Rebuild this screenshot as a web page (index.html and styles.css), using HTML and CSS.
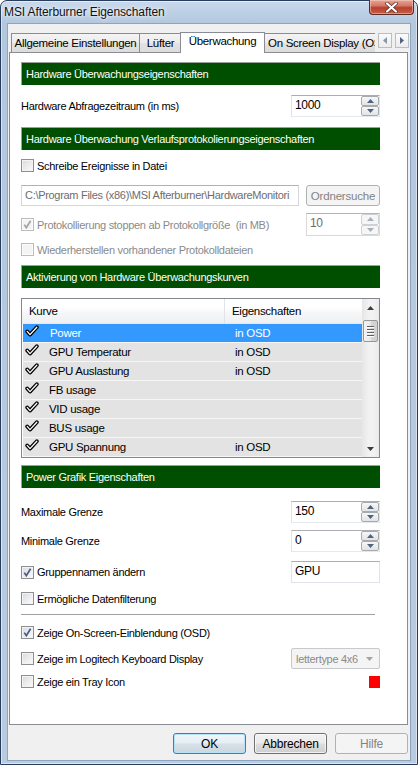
FILE: index.html
```html
<!DOCTYPE html>
<html>
<head>
<meta charset="utf-8">
<title>MSI Afterburner Eigenschaften</title>
<link rel="stylesheet" href="styles.css">
</head>
<body>
<div class="window">
  <div class="titlebar">
    <span class="title">MSI Afterburner Eigenschaften</span>
    <div class="close">
      <svg width="13" height="11" viewBox="0 0 13 11"><path d="M2 1.5 L11 9.5 M11 1.5 L2 9.5" stroke="#5a2a20" stroke-width="3.6" stroke-linecap="round"/><path d="M2 1.5 L11 9.5 M11 1.5 L2 9.5" stroke="#fff" stroke-width="2.2" stroke-linecap="round"/></svg>
    </div>
  </div>
  <div class="client">
    <div class="tabs">
      <div class="tablist">
        <div class="tab t1">Allgemeine Einstellungen</div>
        <div class="tab t2">Lüfter</div>
        <div class="tab active">Überwachung</div>
        <div class="tab t4">On Screen Display (OSD)</div>
      </div>
      <div class="tabarrow"><svg width="4" height="7" viewBox="0 0 4 7"><path d="M4 0 L0 3.5 L4 7Z" fill="#8a96a8"/></svg></div>
      <div class="tabarrow"><svg width="4" height="7" viewBox="0 0 4 7"><path d="M0 0 L4 3.5 L0 7Z" fill="#4e6483"/></svg></div>
    </div>
    <div class="panel">
      <div class="hdr h1">Hardware Überwachungseigenschaften</div>
      <div class="row r-poll">
        <span>Hardware Abfragezeitraum (in ms)</span>
        <div class="spin"><span class="val">1000</span><div class="sbtns"><span class="sb"><svg width="7" height="4" viewBox="0 0 7 4"><path d="M0 4 L3.5 0 L7 4Z" fill="#4e6483"/></svg></span><span class="sb"><svg width="7" height="4" viewBox="0 0 7 4"><path d="M0 0 L3.5 4 L7 0Z" fill="#4e6483"/></svg></span></div></div>
      </div>
      <div class="hdr h2">Hardware Überwachung Verlaufsprotokolierungseigenschaften</div>
      <div class="crow c-write"><span class="cb"></span><span>Schreibe Ereignisse in Datei</span></div>
      <div class="row r-path">
        <div class="pathbox">C:\Program Files (x86)\MSI Afterburner\HardwareMonitori</div>
        <div class="btn disabled browse">Ordnersuche</div>
      </div>
      <div class="row r-proto">
        <div class="crow dis"><span class="cb disabled"><svg width="11" height="11" viewBox="0 0 11 11"><path d="M2.3 5.6 L4.3 8.6 L8.6 1.8" fill="none" stroke="#a3a3a3" stroke-width="1.7"/></svg></span><span>Protokollierung stoppen ab Protokollgröße&nbsp; (in MB)</span></div>
        <div class="spin small disabled"><span class="val">10</span><div class="sbtns"><span class="sb"><svg width="7" height="4" viewBox="0 0 7 4"><path d="M0 4 L3.5 0 L7 4Z" fill="#a8b0bb"/></svg></span><span class="sb"><svg width="7" height="4" viewBox="0 0 7 4"><path d="M0 0 L3.5 4 L7 0Z" fill="#a8b0bb"/></svg></span></div></div>
      </div>
      <div class="crow dis c-restore"><span class="cb disabled"></span><span>Wiederherstellen vorhandener Protokolldateien</span></div>
      <div class="hdr h3">Aktivierung von Hardware Überwachungskurven</div>
      <div class="list">
        <div class="lmain">
          <div class="lhead"><span class="col1">Kurve</span><span class="col2">Eigenschaften</span></div>
          <div class="lrow sel"><span class="ck"><svg width="14" height="13" viewBox="0 0 14 13"><path d="M2.2 6.4 L5 9.6 L11.8 2.2" fill="none" stroke="#000" stroke-width="3.8" stroke-linecap="round" stroke-linejoin="round"/><path d="M2.2 6.4 L5 9.6 L11.8 2.2" fill="none" stroke="#fff" stroke-width="1.3" stroke-linecap="round" stroke-linejoin="round"/></svg></span><span class="name first">Power</span><span class="prop">in OSD</span></div>
          <div class="lrow"><span class="ck"><svg width="14" height="13" viewBox="0 0 14 13"><path d="M2.2 6.4 L5 9.6 L11.8 2.2" fill="none" stroke="#000" stroke-width="3.8" stroke-linecap="round" stroke-linejoin="round"/><path d="M2.2 6.4 L5 9.6 L11.8 2.2" fill="none" stroke="#fff" stroke-width="1.3" stroke-linecap="round" stroke-linejoin="round"/></svg></span><span class="name">GPU Temperatur</span><span class="prop">in OSD</span></div>
          <div class="lrow"><span class="ck"><svg width="14" height="13" viewBox="0 0 14 13"><path d="M2.2 6.4 L5 9.6 L11.8 2.2" fill="none" stroke="#000" stroke-width="3.8" stroke-linecap="round" stroke-linejoin="round"/><path d="M2.2 6.4 L5 9.6 L11.8 2.2" fill="none" stroke="#fff" stroke-width="1.3" stroke-linecap="round" stroke-linejoin="round"/></svg></span><span class="name">GPU Auslastung</span><span class="prop">in OSD</span></div>
          <div class="lrow"><span class="ck"><svg width="14" height="13" viewBox="0 0 14 13"><path d="M2.2 6.4 L5 9.6 L11.8 2.2" fill="none" stroke="#000" stroke-width="3.8" stroke-linecap="round" stroke-linejoin="round"/><path d="M2.2 6.4 L5 9.6 L11.8 2.2" fill="none" stroke="#fff" stroke-width="1.3" stroke-linecap="round" stroke-linejoin="round"/></svg></span><span class="name">FB usage</span><span class="prop"></span></div>
          <div class="lrow"><span class="ck"><svg width="14" height="13" viewBox="0 0 14 13"><path d="M2.2 6.4 L5 9.6 L11.8 2.2" fill="none" stroke="#000" stroke-width="3.8" stroke-linecap="round" stroke-linejoin="round"/><path d="M2.2 6.4 L5 9.6 L11.8 2.2" fill="none" stroke="#fff" stroke-width="1.3" stroke-linecap="round" stroke-linejoin="round"/></svg></span><span class="name">VID usage</span><span class="prop"></span></div>
          <div class="lrow"><span class="ck"><svg width="14" height="13" viewBox="0 0 14 13"><path d="M2.2 6.4 L5 9.6 L11.8 2.2" fill="none" stroke="#000" stroke-width="3.8" stroke-linecap="round" stroke-linejoin="round"/><path d="M2.2 6.4 L5 9.6 L11.8 2.2" fill="none" stroke="#fff" stroke-width="1.3" stroke-linecap="round" stroke-linejoin="round"/></svg></span><span class="name">BUS usage</span><span class="prop"></span></div>
          <div class="lrow last"><span class="ck"><svg width="14" height="13" viewBox="0 0 14 13"><path d="M2.2 6.4 L5 9.6 L11.8 2.2" fill="none" stroke="#000" stroke-width="3.8" stroke-linecap="round" stroke-linejoin="round"/><path d="M2.2 6.4 L5 9.6 L11.8 2.2" fill="none" stroke="#fff" stroke-width="1.3" stroke-linecap="round" stroke-linejoin="round"/></svg></span><span class="name">GPU Spannung</span><span class="prop">in OSD</span></div>
        </div>
        <div class="vscroll">
          <div class="sarrow"><svg width="7" height="4" viewBox="0 0 7 4"><path d="M0 4 L3.5 0 L7 4Z" fill="#3c3c3c"/></svg></div>
          <div class="thumb"><span></span><span></span><span></span><span></span></div>
          <div class="track"></div>
          <div class="sarrow"><svg width="7" height="4" viewBox="0 0 7 4"><path d="M0 0 L3.5 4 L7 0Z" fill="#3c3c3c"/></svg></div>
        </div>
      </div>
      <div class="hdr h4">Power Grafik Eigenschaften</div>
      <div class="row r-max">
        <span>Maximale Grenze</span>
        <div class="spin"><span class="val">150</span><div class="sbtns"><span class="sb"><svg width="7" height="4" viewBox="0 0 7 4"><path d="M0 4 L3.5 0 L7 4Z" fill="#4e6483"/></svg></span><span class="sb"><svg width="7" height="4" viewBox="0 0 7 4"><path d="M0 0 L3.5 4 L7 0Z" fill="#4e6483"/></svg></span></div></div>
      </div>
      <div class="row r-min">
        <span>Minimale Grenze</span>
        <div class="spin"><span class="val">0</span><div class="sbtns"><span class="sb"><svg width="7" height="4" viewBox="0 0 7 4"><path d="M0 4 L3.5 0 L7 4Z" fill="#4e6483"/></svg></span><span class="sb"><svg width="7" height="4" viewBox="0 0 7 4"><path d="M0 0 L3.5 4 L7 0Z" fill="#4e6483"/></svg></span></div></div>
      </div>
      <div class="row r-gpu">
        <div class="crow"><span class="cb"><svg width="11" height="11" viewBox="0 0 11 11"><path d="M2.3 5.6 L4.3 8.6 L8.6 1.8" fill="none" stroke="#4a5c86" stroke-width="1.7"/></svg></span><span>Gruppennamen ändern</span></div>
        <div class="textbox">GPU</div>
      </div>
      <div class="crow c-filter"><span class="cb"></span><span>Ermögliche Datenfilterung</span></div>
      <div class="sep"></div>
      <div class="crow c-osd"><span class="cb"><svg width="11" height="11" viewBox="0 0 11 11"><path d="M2.3 5.6 L4.3 8.6 L8.6 1.8" fill="none" stroke="#4a5c86" stroke-width="1.7"/></svg></span><span>Zeige On-Screen-Einblendung (OSD)</span></div>
      <div class="row r-logi">
        <div class="crow"><span class="cb"></span><span>Zeige im Logitech Keyboard Display</span></div>
        <div class="combo"><span>lettertype 4x6</span><svg width="7" height="4" viewBox="0 0 7 4"><path d="M0 0 L3.5 4 L7 0Z" fill="#a3a3a3"/></svg></div>
      </div>
      <div class="row r-tray">
        <div class="crow"><span class="cb"></span><span>Zeige ein Tray Icon</span></div>
        <span class="swatch"></span>
      </div>
    </div>
    <div class="buttons">
      <div class="btn default">OK</div>
      <div class="btn">Abbrechen</div>
      <div class="btn disabled">Hilfe</div>
    </div>
  </div>
</div>
</body>
</html>
```
FILE: styles.css
```css
* { box-sizing: border-box; }
html, body { margin: 0; padding: 0; }
body {
  width: 418px;
  height: 765px;
  overflow: hidden;
  font-family: "Liberation Sans", Arial, sans-serif;
  font-size: 11px;
  letter-spacing: -0.3px;
  color: #000;
  background: #fff;
}
.window {
  width: 418px;
  height: 765px;
  display: flex;
  flex-direction: column;
  background: linear-gradient(180deg, #c9d9ec 0, #b3c7de 22px, #b6c9df 60%, #b9cbe0 100%);
  border: 1px solid #263e5c;
  border-radius: 7px 7px 0 0;
  box-shadow: inset 0 0 0 1px rgba(255,255,255,0.5);
}
.titlebar {
  height: 22px;
  display: flex;
  justify-content: space-between;
  align-items: flex-start;
  padding: 0 3px 0 3px;
  flex: none;
}
.title {
  margin-top: 4px;
  font-size: 12px;
  letter-spacing: -0.1px;
  color: #111;
  text-shadow: 0 0 6px rgba(255,255,255,0.95), 0 0 3px rgba(255,255,255,0.9);
}
.close {
  width: 45px;
  height: 15px;
  margin-top: -1px;
  border: 1px solid #5a2c24;
  border-top: none;
  border-radius: 0 0 4px 4px;
  background: linear-gradient(180deg, #e6a597 0, #d17a6a 40%, #b8402d 55%, #c85e46 100%);
  box-shadow: inset 0 0 0 1px rgba(255,210,200,0.5);
  display: flex;
  align-items: center;
  justify-content: center;
}
.client {
  flex: 1;
  margin: 0 6px 3px 6px;
  border: 1px solid #8fa4bd;
  background: #f0f0f0;
  display: flex;
  flex-direction: column;
}
.tabs {
  height: 29px;
  margin-bottom: -1px;
  display: flex;
  align-items: flex-end;
  padding-left: 3px;
  position: relative;
  z-index: 1;
  flex: none;
}
.tablist {
  width: 364px;
  height: 29px;
  display: flex;
  align-items: flex-end;
  overflow: hidden;
  flex: none;
}
.tab {
  height: 19px;
  margin-bottom: 1px;
  border: 1px solid #898c95;
  border-bottom: none;
  background: linear-gradient(180deg, #f4f4f4 0, #ececec 50%, #e3e3e3 51%, #dcdcdc 100%);
  text-align: center;
  line-height: 18px;
  white-space: nowrap;
  flex: none;
  font-size: 11.5px;
}
.t1 { width: 129px; }
.t2 { width: 43px; margin-left: -1px; }
.tab.active {
  width: 85px;
  height: 21px;
  margin: 0 -2px 0 -2px;
  background: #fff;
  line-height: 17px;
  position: relative;
  z-index: 2;
}
.t4 { padding: 0 4px 0 4px; width: 130px; text-align: left; }
.tabarrow {
  width: 14px;
  height: 15px;
  margin-bottom: 5px;
  margin-left: 3px;
  border: 1px solid #b9bdc4;
  background: linear-gradient(180deg, #fbfbfb, #ececec);
  display: flex;
  align-items: center;
  justify-content: center;
  flex: none;
}
.tabarrow:first-of-type { margin-left: 0; }
.panel {
  height: 673px;
  margin: 0 2px 0 1px;
  border: 1px solid #898c95;
  background: #fff;
  padding: 0 27px 0 11px;
  flex: none;
}
.hdr {
  height: 23px;
  background: #004f00;
  color: #fff;
  padding-left: 4px;
  display: flex;
  align-items: center;
  border-top: 1px solid #9aa39a;
  border-left: 1px solid #9aa39a;
  white-space: nowrap;
  overflow: hidden;
}
.h1 { margin-top: 9px; }
.h2 { margin-top: 10px; }
.h3 { margin-top: 9px; }
.h4 { margin-top: 7px; }
.row {
  display: flex;
  align-items: center;
  justify-content: space-between;
}
.crow {
  display: flex;
  align-items: center;
  height: 13px;
  white-space: nowrap;
}
.crow .cb { margin-right: 3px; }
.crow.dis { color: #8a8a8a; }
.cb {
  width: 13px;
  height: 13px;
  border: 1px solid #8e8f8f;
  background: linear-gradient(135deg, #d7d9dd 0, #eeeff1 60%, #fbfbfb 100%);
  box-shadow: inset 0 0 0 1px #f3f3f3;
  display: inline-flex;
  align-items: center;
  justify-content: center;
  flex: none;
}
.cb.disabled {
  border-color: #bcbcbc;
  background: #f4f4f4;
  box-shadow: inset 0 0 0 1px #fbfbfb;
}
.spin {
  width: 89px;
  height: 22px;
  border: 1px solid #e2e3ea;
  border-top-color: #abadb3;
  border-bottom-color: #e3e9ef;
  background: #fff;
  display: flex;
}
.spin.small { width: 74px; height: 24px; }
.spin .val { flex: 1; padding: 2px 0 0 3px; line-height: 15px; font-size: 12px; }
.spin.disabled { border-color: #d9d9d9; border-top-color: #b5b5b5; }
.spin.disabled .val { color: #6d6d6d; }
.sbtns {
  width: 18px;
  display: flex;
  flex-direction: column;
}
.sb {
  flex: 1;
  border: 1px solid #a7abb0;
  border-radius: 2px;
  background: linear-gradient(180deg, #f7f7f7, #e3e3e3);
  display: flex;
  align-items: center;
  justify-content: center;
}
.spin.disabled .sb { border-color: #cfd1d4; background: #f6f6f6; }
.r-poll { margin-top: 10px; height: 22px; }
.c-write { margin-top: 9px; }
.r-path { margin-top: 13px; height: 21px; }
.pathbox {
  width: 278px;
  height: 21px;
  border: 1px solid #d5d7dc;
  border-top-color: #afb2b8;
  color: #6d6d6d;
  padding: 3px 0 0 3px;
  white-space: nowrap;
  overflow: hidden;
  font-size: 11px;
}
.btn {
  width: 73px;
  height: 21px;
  border: 1px solid #707070;
  border-radius: 3px;
  background: linear-gradient(180deg, #f2f2f2 0, #ebebeb 48%, #dddddd 52%, #cfcfcf 100%);
  box-shadow: inset 0 0 0 1px rgba(255,255,255,0.7);
  display: flex;
  align-items: center;
  justify-content: center;
  flex: none;
  font-size: 12px;
  letter-spacing: -0.2px;
}
.btn.disabled {
  border-color: #adb2b5;
  background: #f4f4f4;
  color: #838383;
  box-shadow: none;
}
.btn.browse { width: 74px; font-size: 11.5px; }
.btn.default {
  border-color: #3c7fb1;
  box-shadow: inset 0 0 0 1px #b6e1f8;
  background: linear-gradient(180deg, #f0f6fa 0, #e6eef4 48%, #d7e1e8 52%, #cbd6de 100%);
}
.r-proto { margin-top: 7px; height: 23px; }
.r-proto .spin { height: 23px; }
.c-restore { margin-top: 7px; }
.list {
  margin-top: 10px;
  height: 160px;
  border: 1px solid #828790;
  display: flex;
  background: #fff;
}
.lmain { flex: 1; display: flex; flex-direction: column; }
.lhead {
  height: 25px;
  display: flex;
  align-items: center;
  background: linear-gradient(180deg, #ffffff 0, #ffffff 35%, #f5f6f7 60%, #eef0f2 100%);
  border-bottom: 1px solid #e6e8eb;
  font-size: 11.5px;
}
.lhead .col1 { width: 203px; padding-left: 7px; border-right: 1px solid #dfe2e6; height: 25px; line-height: 25px; }
.lhead .col2 { padding-left: 7px; }
.lrow {
  height: 19px;
  display: flex;
  align-items: center;
  background: #e3e3e3;
  border-bottom: 1px solid #f6f6f6;
  margin-left: 1px;
  font-size: 11.5px;
}
.lrow.sel { background: #3399ff; color: #fff; }
.ck { width: 14px; height: 19px; margin-left: 2px; padding-top: 1px; display: flex; align-items: flex-start; }
.lrow .name { width: 196px; padding-left: 10px; }
.lrow .name.first { padding-left: 11px; }
.vscroll {
  width: 17px;
  display: flex;
  flex-direction: column;
  background: linear-gradient(90deg, #e6e6e6 0, #f2f2f2 40%, #f2f2f2 70%, #e9e9e9 100%);
}
.sarrow { height: 17px; display: flex; align-items: center; justify-content: center; }
.thumb {
  height: 22px;
  margin: 4px 1px 0 1px;
  border: 1px solid #979797;
  border-radius: 2px;
  background: linear-gradient(90deg, #f3f3f3 0, #e8e8e8 50%, #d7d7d7 51%, #d0d0d0 100%);
  display: flex;
  flex-direction: column;
  align-items: center;
  justify-content: center;
  gap: 2px;
}
.thumb span { width: 7px; height: 1px; background: #5f5f5f; box-shadow: 0 1px 0 #fff; }
.track { flex: 1; }
.r-max { margin-top: 13px; height: 22px; }
.r-min { margin-top: 7px; height: 22px; }
.r-gpu { margin-top: 9px; height: 22px; }
.textbox {
  width: 89px;
  height: 22px;
  border: 1px solid #e2e3ea;
  border-top-color: #abadb3;
  padding: 2px 0 0 3px;
  font-size: 12px;
}
.c-filter { margin-top: 9px; }
.sep { margin-top: 9px; height: 1px; width: 354px; background: #a0a0a0; }
.c-osd { margin-top: 11px; }
.r-logi { margin-top: 9px; height: 21px; }
.combo {
  width: 89px;
  height: 21px;
  border: 1px solid #c6c9cd;
  border-radius: 2px;
  background: #f4f4f4;
  color: #8a8a8a;
  display: flex;
  align-items: center;
  justify-content: space-between;
  padding: 0 6px 0 4px;
  white-space: nowrap;
}
.r-tray { margin-top: 6px; height: 13px; }
.swatch { width: 11px; height: 12px; background: #ff0000; }
.buttons {
  display: flex;
  justify-content: flex-end;
  gap: 8px;
  padding: 8px 2px 0 0;
}
```
